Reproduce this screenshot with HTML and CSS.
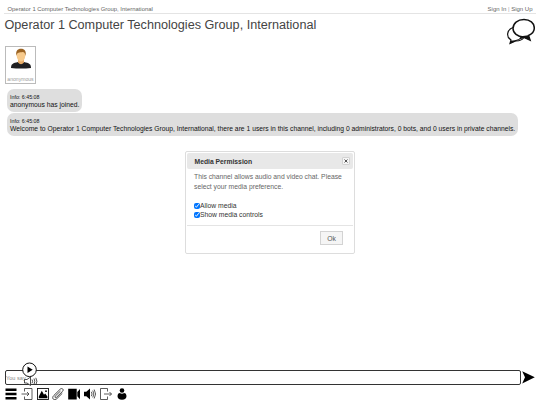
FILE: index.html
```
<!DOCTYPE html>
<html>
<head>
    <meta charset="utf-8">
    <title>Operator 1 Computer Technologies Group, International</title>
    <link rel="stylesheet" href="styles.css">
</head>
<body>
    <div class="topbar">
        <span class="site-name">Operator 1 Computer Technologies Group, International</span>
        <span class="account">Sign In <i>|</i> Sign Up</span>
    </div>

    <div class="heading">
        <h1>Operator 1 Computer Technologies Group, International</h1>
        <svg class="logo" width="30" height="28" viewBox="0 0 30 28">
            <path d="M8 9.500C1.500 12 1 19 6 22L5 25.500L10.500 23C14 23.200 17 22 19 19.500" fill="#fff" stroke="#111" stroke-width="1.200"/>
            <path d="M19 1.500C25 1.500 29.300 5.200 29.300 10C29.300 13.500 27 16 23.500 17.500L25 22L18.500 19C12.500 19 8 15 8 10.500C8 5.500 12.500 1.500 19 1.500Z" fill="#fff" stroke="#111" stroke-width="1.500"/>
            <path d="M16 18.200L23.500 17.200L25.500 22.500L19 19.800L16 21L10.500 23.300L5 25.700L6 22.800L10 22.200L14 21Z" fill="#111"/>
        </svg>
    </div>

    <div class="users">
        <div class="user">
            <svg width="22" height="22" viewBox="0 0 22 22">
                <path d="M1 20C1 16 3 15 8 14H14C19 15 21 16 21 20Q11 21 1 20Z" fill="#202022"/>
                <path d="M8 11H14V14.500Q11 18 8 14.500Z" fill="#e8ac68"/>
                <ellipse cx="11" cy="7.500" rx="4.300" ry="6" fill="#f7ca8c"/>
                <path d="M6.400 8C5.500 3 7.500 .8 11 .8C14.500 .8 16.500 3 15.600 8C15 5.500 14.500 4 12.500 4C9.500 4.500 7 4 6.400 8Z" fill="#9b6322"/>
            </svg>
            <span>anonymous</span>
        </div>
    </div>

    <div class="console">
        <div class="message">
            <div class="info">Info: 6:45:08</div>
            <div class="text">anonymous has joined.</div>
        </div>
        <div class="message">
            <div class="info">Info: 6:45:08</div>
            <div class="text">Welcome to Operator 1 Computer Technologies Group, International, there are 1 users in this channel, including 0 administrators, 0 bots, and 0 users in private channels.</div>
        </div>
    </div>

    <div class="chat-bar">
        <div class="chat-input">You say</div>
        <svg class="send" width="13" height="13" viewBox="0 0 13 13">
            <path d="M.2 .3L12.800 6.300L.2 12.500L3 6.300Z" fill="#000"/>
        </svg>
        <svg class="play" width="16" height="26" viewBox="0 0 16 26">
            <circle cx="7.500" cy="7.800" r="6.800" fill="#fff" stroke="#111" stroke-width="1"/>
            <path d="M5.500 4.500L10.700 7.800L5.500 11.100Z" fill="#000"/>
            <g fill="none" stroke="#222" stroke-width=".8">
                <path d="M2.500 17.500H5L8.500 15V23.500L5 21H2.500Z" fill="#fff"/>
                <path d="M10 17.500Q11.300 19.300 10 21.300M12 16.500Q13.600 19.300 12 22.300M13.800 15.800Q16 19.300 13.800 23"/>
            </g>
        </svg>
    </div>

    <div class="toolbar">
        <svg viewBox="0 0 12 12"><path d="M.5 .5H11.500V3H.5ZM.5 4.800H11.500V7.300H.5ZM.5 9H11.500V11.500H.5Z" fill="#000"/></svg>
        <svg viewBox="0 0 12 12"><path d="M3.500 3.500V.5H11V11.500H3.500V8.500M.5 6H8M6 4L8 6L6 8" fill="none" stroke="#333" stroke-width=".8"/></svg>
        <svg viewBox="0 0 12 12"><rect x=".5" y=".5" width="11" height="11" fill="#fff" stroke="#111" stroke-width=".9"/><path d="M1.800 10.200V8.500L4.800 2.800L7 6.700L8.200 5.500L10.400 8.500V10.200Z" fill="#000"/><circle cx="9" cy="3.200" r=".9"/></svg>
        <svg viewBox="0 0 12 12"><path d="M8.500 3L3.200 8.200C2.300 9.200 3.500 10.300 4.400 9.400L10.500 3.400C12.300 1.500 10 -.5 8.200 1.200L1.800 7.500C-1 10.300 2.200 13.200 4.800 10.700L10.300 5.300" fill="none" stroke="#333" stroke-width=".9"/></svg>
        <svg viewBox="0 0 12 12"><path d="M.2 .7H8.700V11.500H.2ZM9.300 4L12 1V11.200L9.300 8.200Z" fill="#000"/></svg>
        <svg viewBox="0 0 12 12"><path d="M0 3.800H2.300L6 .6V11.400L2.300 8.200H0Z" fill="#000"/><path d="M7.300 3.800Q8.800 6 7.300 8.200M8.800 2.500Q10.800 6 8.800 9.500M10.200 1.500Q13 6 10.200 10.500" fill="none" stroke="#333" stroke-width=".8"/></svg>
        <svg viewBox="0 0 12 12"><path d="M7.500 3.500V.5H.5V11.500H7.500V8.500M4 6H11.500M9.500 4L11.500 6L9.500 8" fill="none" stroke="#333" stroke-width=".8"/></svg>
        <svg viewBox="0 0 12 12"><circle cx="6" cy="2.500" r="2.300"/><path d="M3.800 5.100Q6 6.600 8.200 5.100Q10.500 5.300 10.500 8Q10.500 11.700 6 11.700Q1.500 11.700 1.500 8Q1.500 5.300 3.800 5.100Z"/></svg>
    </div>

    <div class="dialog">
        <div class="dialog-title">
            <span>Media Permission</span>
            <button class="close"><svg width="4" height="4" viewBox="0 0 4 4"><path d="M.5 .5L3.500 3.500M3.500 .5L.5 3.500" stroke="#555" stroke-width="1"/></svg></button>
        </div>
        <div class="dialog-content">
            <p>This channel allows audio and video chat. Please<br>select your media preference.</p>
            <label><input type="checkbox" checked>Allow media</label>
            <label><input type="checkbox" checked>Show media controls</label>
        </div>
        <div class="dialog-buttons">
            <button class="ok">Ok</button>
        </div>
    </div>
</body>
</html>
```
FILE: styles.css
```
* {
    box-sizing: border-box;
}

body {
    margin: 0;
    width: 540px;
    height: 405px;
    display: flex;
    flex-direction: column;
    overflow: hidden;
    background: #fff;
    color: #111;
    font-family: "Liberation Sans", Arial, sans-serif;
}

.topbar {
    height: 14px;
    margin: 0 4px;
    padding: 5px 3.500px 0;
    display: flex;
    justify-content: space-between;
    border-bottom: 1px solid #e4e4e4;
    color: #666;
    font-size: 6px;
    line-height: 8px;
}

.site-name {
    font-size: 5.900px;
}

.account i {
    color: #aaa;
    font-style: normal;
}

.heading {
    height: 32px;
    padding: 4px 5px 0 4.500px;
    display: flex;
    justify-content: space-between;
}

h1 {
    margin: 0;
    font-size: 12.650px;
    font-weight: normal;
    line-height: 15px;
    color: #444;
}

.users {
    height: 43px;
    padding-left: 5px;
}

.user {
    width: 31px;
    height: 38px;
    padding-top: 1px;
    display: flex;
    flex-direction: column;
    align-items: center;
    border: 1px solid #bbb;
    color: #999;
    font-size: 5.100px;
    line-height: 6px;
}

.user span {
    margin-top: 6px;
}

.console {
    flex: 1;
    padding-left: 7px;
    display: flex;
    flex-direction: column;
    align-items: flex-start;
    gap: 1px;
}

.message {
    height: 23px;
    padding: 5px 3px 0;
    border-radius: 7px;
    background: #dedede;
    white-space: nowrap;
}

.info {
    font-size: 5.300px;
    line-height: 6px;
}

.text {
    margin-top: 1px;
    font-size: 6.760px;
    line-height: 8px;
}

.chat-bar {
    position: relative;
    height: 15px;
    margin: 0 5px 2px;
    display: flex;
    align-items: center;
    gap: 1px;
}

.chat-input {
    width: 516px;
    height: 15px;
    border: 1px solid #333;
    border-radius: 2px;
    color: #888;
    font-size: 5.600px;
    line-height: 14px;
}

.play {
    position: absolute;
    left: 17px;
    top: -8px;
}

.toolbar {
    height: 18px;
    padding-left: 5px;
    display: flex;
    gap: 3.800px;
}

.toolbar svg {
    width: 12px;
    height: 12px;
    margin-top: 1px;
}

.dialog {
    position: absolute;
    left: 185px;
    top: 151px;
    width: 170px;
    height: 103px;
    padding: 1px;
    border: 1px solid #ddd;
    border-radius: 2px;
    background: #fff;
}

.dialog-title {
    height: 16px;
    padding: 0 3px 0 7.500px;
    display: flex;
    align-items: center;
    justify-content: space-between;
    border-radius: 2px;
    background: #e8e8e8;
    color: #333;
    font-size: 6.770px;
    font-weight: bold;
}

button {
    padding: 0;
    border: 1px solid #d3d3d3;
    background: #f5f5f5;
    color: #555;
    font-family: inherit;
}

.close {
    width: 8px;
    height: 8px;
    display: flex;
    align-items: center;
    justify-content: center;
    border-radius: 1px;
}

.dialog-content {
    height: 56px;
    padding: 3px 7px 0;
    color: #333;
    font-size: 6.770px;
}

.dialog-content p {
    margin: 0 0 9px;
    color: #666;
    line-height: 10px;
}

.dialog-content label {
    height: 9px;
    display: flex;
    align-items: center;
}

.dialog-content input {
    width: 6px;
    height: 6px;
    margin: 0;
}

.dialog-buttons {
    padding: 5px 10px 0;
    display: flex;
    justify-content: flex-end;
    border-top: 1px solid #e4e4e4;
}

.ok {
    width: 23px;
    height: 14px;
    font-size: 6.770px;
}
```
